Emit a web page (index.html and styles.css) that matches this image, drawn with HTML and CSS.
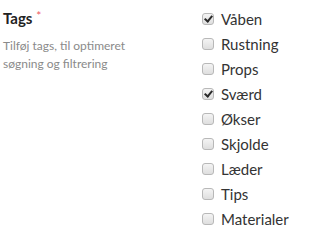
FILE: index.html
```html
<!DOCTYPE html>
<html>
<head>
<meta charset="utf-8">
<link rel="stylesheet" href="styles.css">
</head>
<body>
<div class="field">
  <div class="info">
    <div class="title">Tags <span class="req">*</span></div>
    <div class="desc">Tilføj tags, til optimeret søgning og filtrering</div>
  </div>
  <ul class="opts">
    <li><span class="cb checked"></span>Våben</li>
    <li><span class="cb"></span>Rustning</li>
    <li><span class="cb"></span>Props</li>
    <li><span class="cb checked"></span>Sværd</li>
    <li><span class="cb"></span>Økser</li>
    <li><span class="cb"></span>Skjolde</li>
    <li><span class="cb"></span>Læder</li>
    <li><span class="cb"></span>Tips</li>
    <li><span class="cb"></span>Materialer</li>
  </ul>
</div>
</body>
</html>
```
FILE: styles.css
```css
html, body { margin: 0; padding: 0; background: #fff; }
body { font-family: Lato, "Open Sans", sans-serif; }
.field {
  display: grid;
  grid-template-columns: 199px 1fr;
  padding: 6px 0 0 3px;
}
.title { font-size: 15px; font-weight: 700; color: #222; line-height: 24px; }
.req { color: #ef5a5f; font-size: 12px; font-weight: 400; vertical-align: top; position: relative; top: -2px; }
.desc { font-size: 12px; color: #8a8a8a; line-height: 18px; margin-top: 7px; width: 140px; }
.opts { list-style: none; margin: 0; padding: 0; }
.opts li { display: flex; align-items: center; height: 25px; font-size: 15px; color: #333; }
.cb {
  box-sizing: border-box;
  width: 12px; height: 12px;
  border: 1px solid #b8b8b8;
  border-radius: 3px;
  background: linear-gradient(#f4f4f4, #dedede);
  margin: 1px 7px 0 0;
  position: relative;
}
.cb.checked::after {
  content: "";
  position: absolute;
  left: 3px; top: 0px;
  width: 3px; height: 6px;
  border: solid #2a2a2a;
  border-width: 0 2px 2px 0;
  transform: rotate(40deg);
}
```
